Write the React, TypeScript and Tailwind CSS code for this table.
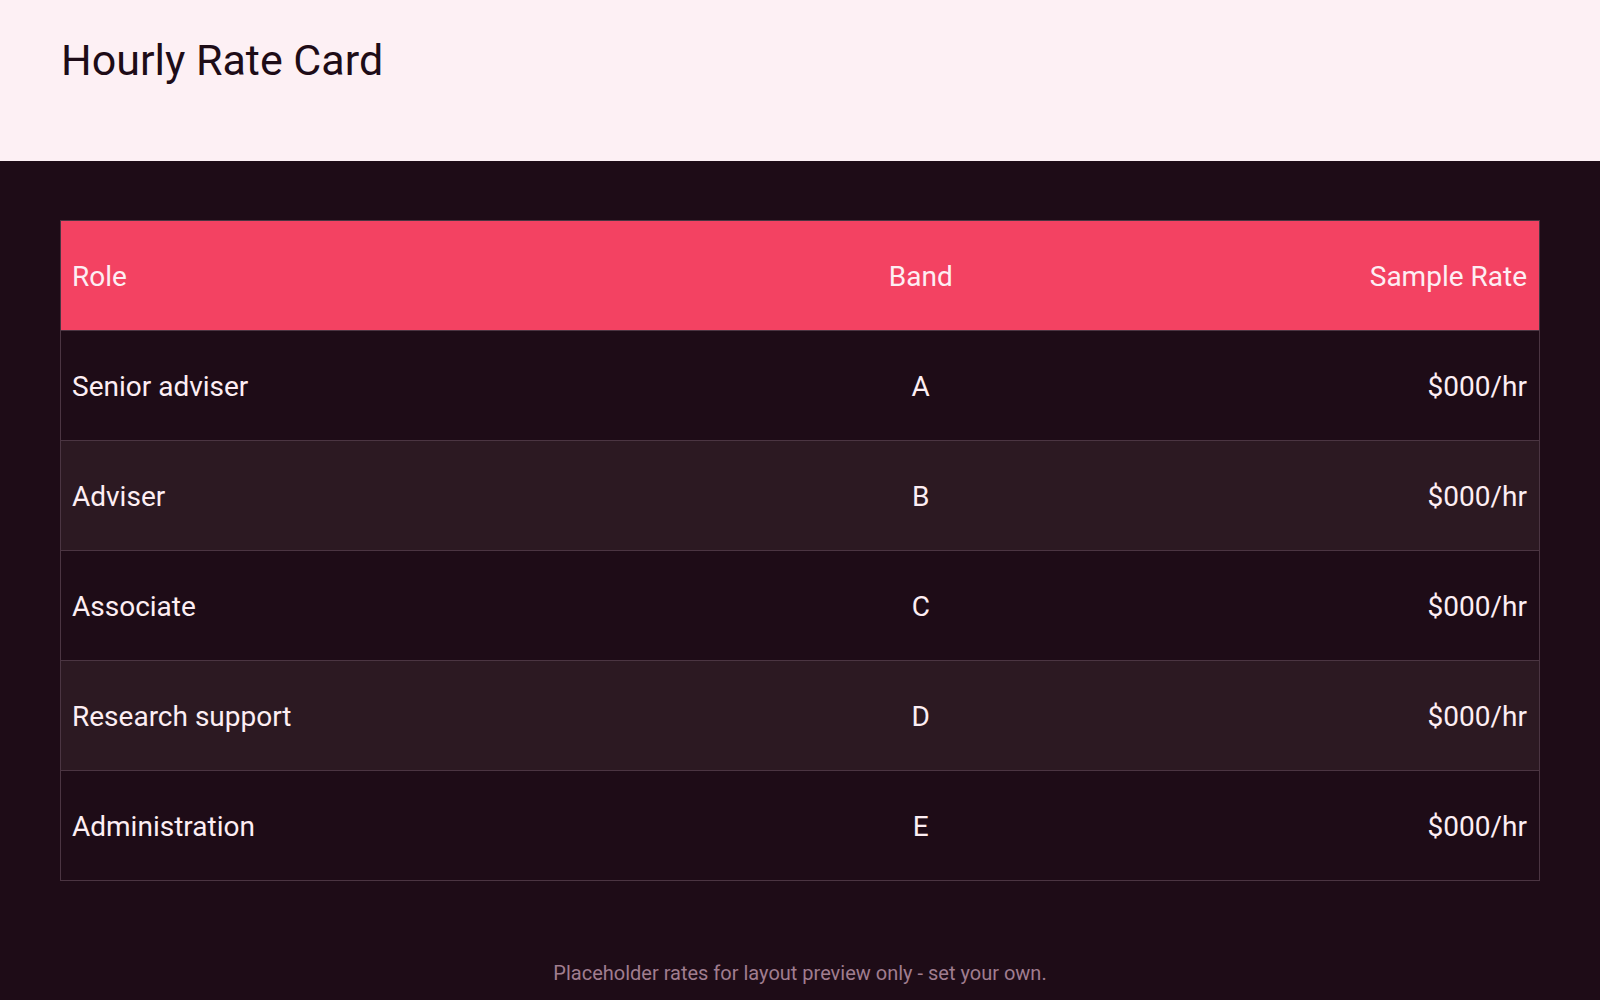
const rows = [
  { role: "Senior adviser", band: "A", rate: "$000/hr" },
  { role: "Adviser", band: "B", rate: "$000/hr" },
  { role: "Associate", band: "C", rate: "$000/hr" },
  { role: "Research support", band: "D", rate: "$000/hr" },
  { role: "Administration", band: "E", rate: "$000/hr" },
];

export default function App() {
  return (
    <div className="min-h-screen bg-[#1e0c17] font-['Roboto',sans-serif]">
      <header className="h-[161px] bg-[#fdf0f4] px-[61px] pt-[36px]">
        <h1 className="text-[43px] leading-[48px] text-[#1e0c17]">Hourly Rate Card</h1>
      </header>

      <main className="px-[60px] pt-[59px]">
        <div className="border border-[#4b3542]">
          <div className="grid h-[109px] grid-cols-[3fr_1fr_2fr] items-center bg-[#f34262] pl-[11px] pr-3 pt-[3px] text-[28px] text-[#fdeef3]">
            <span>Role</span>
            <span className="text-center">Band</span>
            <span className="text-right">Sample Rate</span>
          </div>
          {rows.map((row, i) => (
            <div
              key={row.role}
              className={`grid h-[110px] grid-cols-[3fr_1fr_2fr] items-center border-t border-[#4b3542] pl-[11px] pr-3 pt-[2px] text-[28px] text-[#fdeef3] ${
                i % 2 === 1 ? "bg-[#2c1922]" : "bg-[#1e0c17]"
              }`}
            >
              <span>{row.role}</span>
              <span className="text-center">{row.band}</span>
              <span className="text-right">{row.rate}</span>
            </div>
          ))}
        </div>

        <p className="mt-[77px] text-center text-[20px] text-[#a07d8f]">
          Placeholder rates for layout preview only - set your own.
        </p>
      </main>
    </div>
  );
}
